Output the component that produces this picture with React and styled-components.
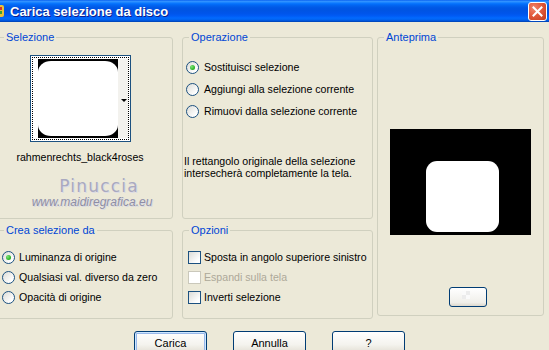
import React from "react";
import styled, { createGlobalStyle } from "styled-components";

const GlobalStyle = createGlobalStyle`
  html, body {
    margin: 0;
    padding: 0;
    background: #ece9d8;
  }
  body {
    width: 549px;
    height: 350px;
    overflow: hidden;
    font-family: "Liberation Sans", Arial, sans-serif;
    font-size: 10.6px;
    color: #000;
  }
`;

const Window = styled.div`
  width: 549px;
  height: 350px;
  overflow: hidden;
  background: #ece9d8;
`;

const TitleBar = styled.div`
  height: 22px;
  display: flex;
  align-items: center;
  background: linear-gradient(
    180deg,
    #0058ee 0%,
    #3593ff 5%,
    #288eff 9%,
    #127dff 13%,
    #036ffc 18%,
    #0262ee 26%,
    #0057e5 36%,
    #0054e3 46%,
    #0055eb 62%,
    #005bf5 72%,
    #026afe 82%,
    #0062ef 90%,
    #0052d6 95%,
    #0040ab 100%
  );
`;

const TitleText = styled.div`
  flex: 1;
  margin-left: 5px;
  color: #fff;
  font-weight: bold;
  font-size: 13px;
  text-shadow: 1px 1px 0 #0f1e89;
`;

const CloseButton = styled.div`
  width: 19px;
  height: 19px;
  margin-right: 2px;
  box-sizing: border-box;
  border: 1px solid #fff;
  border-radius: 3px;
  background: radial-gradient(circle at 30% 30%, #f0866c 0%, #e25a3c 45%, #c23b1c 100%);
  display: flex;
  align-items: center;
  justify-content: center;
`;

const Body = styled.div`
  padding-top: 15px;
`;

const Columns = styled.div`
  display: flex;
  margin-left: -3px;
`;

const Column = styled.div`
  display: flex;
  flex-direction: column;
  width: ${props => props.$w}px;
  margin-left: ${props => props.$ml || 0}px;
`;

const GroupBox = styled.div`
  position: relative;
  box-sizing: border-box;
  height: ${props => props.$h}px;
  margin-top: ${props => props.$mt || 0}px;
  border: 1px solid #d0d0bf;
  border-radius: 3px;
  display: flex;
  flex-direction: column;
  padding: ${props => props.$pad || "0"};
  align-items: ${props => props.$align || "stretch"};
`;

const GroupLabel = styled.div`
  position: absolute;
  top: -7px;
  left: 6px;
  padding: 0 2px;
  line-height: 13px;
  font-size: 11px;
  background: #ece9d8;
  color: #0046d5;
`;

const Thumb = styled.div`
  width: 101px;
  height: 87px;
  box-sizing: border-box;
  border: 1px solid #1c5180;
  padding: 1px;
  background: #fff;
`;

const ThumbInner = styled.div`
  height: 100%;
  box-sizing: border-box;
  border: 1px dotted #000;
  display: flex;
  padding: 1px 0 1px 5px;
`;

const ThumbStrip = styled.div`
  flex: 1;
  background: #f3f2ee;
  display: flex;
  align-items: center;
  justify-content: flex-end;
  padding-right: 1px;
`;

const Arrow = styled.div`
  width: 0;
  height: 0;
  border-left: 3px solid transparent;
  border-right: 3px solid transparent;
  border-top: 3px solid #000;
  margin-top: 3px;
`;

const FileName = styled.div`
  margin-top: 9px;
  line-height: 13px;
`;

const Watermark = styled.div`
  margin-top: 12px;
  margin-left: 24px;
  display: flex;
  flex-direction: column;
  align-items: center;
`;

const WmName = styled.div`
  font-family: "DejaVu Sans", sans-serif;
  font-size: 17px;
  line-height: 20px;
  letter-spacing: 1.2px;
  padding-left: 14px;
  color: #a9a9c0;
  text-shadow: 1px 1px 0 #dcdce6;
`;

const WmUrl = styled.div`
  font-family: "Liberation Sans", Arial, sans-serif;
  font-style: italic;
  font-size: 12px;
  line-height: 13px;
  color: #8e8ea6;
  text-shadow: 1px 1px 0 #d9d9e3;
`;

const OptionRow = styled.div`
  height: ${props => props.$h}px;
  display: flex;
  align-items: center;
  gap: ${props => props.$gap}px;
  color: ${props => (props.$disabled ? "#aca899" : "#000")};
  white-space: nowrap;
`;

const Radio = styled.span`
  position: relative;
  width: 13px;
  height: 13px;
  box-sizing: border-box;
  flex: none;
  border-radius: 50%;
  border: 1px solid #1c5180;
  background: linear-gradient(135deg, #dcdcd7 0%, #fff 80%);
  &::after {
    content: "";
    display: ${props => (props.$checked ? "block" : "none")};
    position: absolute;
    left: 3px;
    top: 3px;
    width: 5px;
    height: 5px;
    border-radius: 50%;
    background: radial-gradient(circle at 35% 35%, #7ee27a 0%, #2fb82b 60%, #168e12 100%);
  }
`;

const Check = styled.span`
  width: 13px;
  height: 13px;
  box-sizing: border-box;
  flex: none;
  border: 1px solid ${props => (props.$disabled ? "#cac8bb" : "#1c5180")};
  background: ${props =>
    props.$disabled ? "#fff" : "linear-gradient(135deg, #dcdcd7 0%, #fff 80%)"};
`;

const InfoText = styled.div`
  margin-top: 33px;
  margin-left: -2px;
  line-height: 12px;
`;

const PreviewBox = styled.div`
  width: 141px;
  height: 106px;
  background: #000;
  display: flex;
  justify-content: flex-start;
  padding: 32px 0 0 36px;
  box-sizing: border-box;
`;

const PreviewShape = styled.div`
  width: 73px;
  height: 71px;
  background: #fff;
  border-radius: 11px;
`;

const SmallButton = styled.div`
  width: 38px;
  height: 20px;
  margin-top: 52px;
  margin-left: 15px;
  box-sizing: border-box;
  border: 1px solid #003c74;
  border-radius: 3px;
  background:
    repeating-conic-gradient(#ececec 0% 25%, #fafafa 0% 50%) 12px 3px / 8px 8px no-repeat,
    linear-gradient(180deg, #fff 0%, #f0efea 80%, #dcd8cc 100%);
`;

const ButtonRow = styled.div`
  display: flex;
  gap: 26px;
  padding-left: 134px;
  margin-top: 12px;
  font-size: 11px;
`;

const Button = styled.div`
  width: 73px;
  height: 23px;
  box-sizing: border-box;
  border: 1px solid #003c74;
  border-radius: 3px;
  display: flex;
  align-items: center;
  justify-content: center;
  background: linear-gradient(180deg, #ffffff 0%, #f4f3ee 60%, #e6e3d9 90%, #d6d0c5 100%);
  box-shadow: ${props =>
    props.$default ? "inset 0 0 0 1px #cee7ff, inset 0 0 0 2px #98b8ea" : "none"};
`;

const ThumbImage = () => (
  <svg width="80" height="79" viewBox="0 0 80 79">
    <rect width="80" height="79" fill="#000" />
    <rect x="0" y="2" width="80" height="75" rx="13" ry="11" fill="#fff" />
    <rect x="0" y="14" width="80" height="51" fill="#fff" />
  </svg>
);

const AppIcon = () => (
  <svg width="16" height="16" viewBox="0 0 16 16" style={{ marginLeft: -11 }}>
    <rect x="1" y="2" width="14" height="12" rx="2" fill="#e8c23a" />
    <rect x="3" y="4" width="10" height="3" fill="#d8332a" />
    <rect x="3" y="8" width="10" height="3" fill="#3aa23a" />
  </svg>
);

const CloseIcon = () => (
  <svg width="11" height="11" viewBox="0 0 11 11">
    <path d="M1.5 1.5 L9.5 9.5 M9.5 1.5 L1.5 9.5" stroke="#fff" strokeWidth="2" strokeLinecap="square" />
  </svg>
);

export default function App() {
  return (
    <Window>
      <GlobalStyle />
      <TitleBar>
        <AppIcon />
        <TitleText>Carica selezione da disco</TitleText>
        <CloseButton>
          <CloseIcon />
        </CloseButton>
      </TitleBar>
      <Body>
        <Columns>
          <Column $w={176}>
            <GroupBox $h={182} $pad="17px 10px 0 0" $align="center">
              <GroupLabel>Selezione</GroupLabel>
              <Thumb>
                <ThumbInner>
                  <ThumbImage />
                  <ThumbStrip>
                    <Arrow />
                  </ThumbStrip>
                </ThumbInner>
              </Thumb>
              <FileName>rahmenrechts_black4roses</FileName>
              <Watermark>
                <WmName>Pinuccia</WmName>
                <WmUrl>www.maidiregrafica.eu</WmUrl>
              </Watermark>
            </GroupBox>
            <GroupBox $h={89} $mt={11} $pad="16px 0 0 4px">
              <GroupLabel>Crea selezione da</GroupLabel>
              <OptionRow $h={20} $gap={4}>
                <Radio $checked />
                Luminanza di origine
              </OptionRow>
              <OptionRow $h={20} $gap={4}>
                <Radio />
                Qualsiasi val. diverso da zero
              </OptionRow>
              <OptionRow $h={20} $gap={4}>
                <Radio />
                Opacità di origine
              </OptionRow>
            </GroupBox>
          </Column>
          <Column $w={191} $ml={9}>
            <GroupBox $h={182} $pad="18px 0 0 3px">
              <GroupLabel>Operazione</GroupLabel>
              <OptionRow $h={22} $gap={5}>
                <Radio $checked />
                Sostituisci selezione
              </OptionRow>
              <OptionRow $h={22} $gap={5}>
                <Radio />
                Aggiungi alla selezione corrente
              </OptionRow>
              <OptionRow $h={22} $gap={5}>
                <Radio />
                Rimuovi dalla selezione corrente
              </OptionRow>
              <InfoText>
                Il rettangolo originale della selezione
                <br />
                intersecherà completamente la tela.
              </InfoText>
            </GroupBox>
            <GroupBox $h={89} $mt={11} $pad="16px 0 0 5px">
              <GroupLabel>Opzioni</GroupLabel>
              <OptionRow $h={20} $gap={3}>
                <Check />
                Sposta in angolo superiore sinistro
              </OptionRow>
              <OptionRow $h={20} $gap={3} $disabled>
                <Check $disabled />
                Espandi sulla tela
              </OptionRow>
              <OptionRow $h={20} $gap={3}>
                <Check />
                Inverti selezione
              </OptionRow>
            </GroupBox>
          </Column>
          <Column $w={167} $ml={4}>
            <GroupBox $h={279} $pad="91px 0 0 0" $align="center">
              <GroupLabel>Anteprima</GroupLabel>
              <PreviewBox>
                <PreviewShape />
              </PreviewBox>
              <SmallButton />
            </GroupBox>
          </Column>
        </Columns>
        <ButtonRow>
          <Button $default>Carica</Button>
          <Button>Annulla</Button>
          <Button>?</Button>
        </ButtonRow>
      </Body>
    </Window>
  );
}
